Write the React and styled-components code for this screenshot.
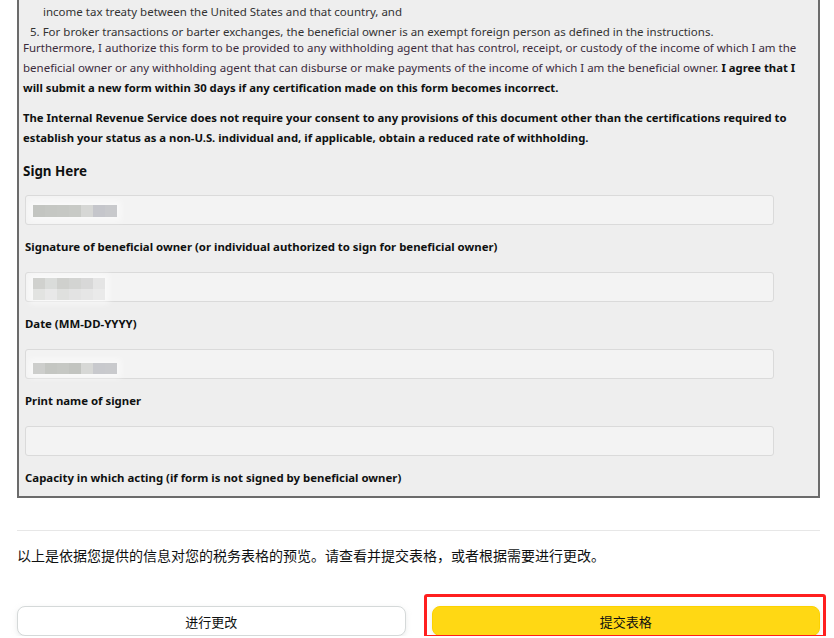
import React from 'react'
import styled, { createGlobalStyle } from 'styled-components'

const GlobalStyle = createGlobalStyle`
  html, body {
    margin: 0;
    padding: 0;
    background: #ffffff;
  }
  body {
    font-family: 'Noto Sans', 'Noto Sans CJK SC', sans-serif;
    color: #0f1111;
    overflow: hidden;
  }
`

const Page = styled.div`
  width: 834px;
  box-sizing: border-box;
  padding: 0 14px 0 17px;
`

const Preview = styled.div`
  background: #eeeeee;
  border: 2px solid #6b6b6b;
  border-top: none;
  padding: 2px 4px 8px 4px;
  font-size: 11.5px;
  line-height: 20px;
`

const List = styled.ol`
  list-style: none;
  margin: 0 0 -4px 0;
  padding: 0;
  color: #333333;
`

const ListLine = styled.li`
  padding-left: ${p => p.$indent}px;
  white-space: nowrap;
`

const Para = styled.p`
  margin: 0 0 10px 0;
  color: #3b2c3c;
  b {
    color: #0f1111;
    font-weight: 700;
    font-size: 11.3px;
  }
`

const Line = styled.span`
  display: block;
  white-space: nowrap;
`

const BoldPara = styled.p`
  margin: 0;
  font-size: 11.3px;
  font-weight: 700;
  color: #0f1111;
`

const SignTitle = styled.h4`
  margin: 13px 0 0 0;
  font-size: 13.4px;
  line-height: 20px;
  font-weight: 700;
  color: #0f1111;
`

const FieldGroup = styled.div`
  margin-left: 2px;
  padding-top: ${p => p.$top}px;
`

const Field = styled.div`
  width: 749px;
  height: 30px;
  box-sizing: border-box;
  background: #f3f3f3;
  border: 1px solid #dadada;
  border-radius: 3px;
  padding: ${p => p.$pad};
  display: flex;
  align-items: flex-start;
`

const Mosaic = styled.div`
  display: grid;
  grid-template-columns: repeat(${p => p.$cols}, 12px);
  grid-auto-rows: ${p => p.$row}px;
  box-shadow: 0 0 6px 4px rgba(255, 255, 255, 0.55);
`

const Tile = styled.span`
  background: ${p => p.$c};
`

const FieldLabel = styled.div`
  margin-top: 12px;
  font-size: 11.4px;
  line-height: 20px;
  font-weight: 700;
  color: #0f1111;
  white-space: nowrap;
`

const Divider = styled.hr`
  margin: 32px 0 0 0;
  border: none;
  border-top: 1px solid #e7e7e7;
`

const Notice = styled.p`
  margin: 14px 0 0 0;
  font-family: 'Noto Sans CJK SC', sans-serif;
  font-size: 14px;
  line-height: 20px;
  color: #0f1111;
`

const Actions = styled.div`
  margin-top: 41px;
  display: grid;
  grid-template-columns: 1fr 1fr;
  column-gap: 26px;
`

const Highlight = styled.div`
  position: relative;
  &::after {
    content: '';
    position: absolute;
    top: -12px;
    left: -8px;
    right: -6px;
    bottom: -2px;
    border: 3px solid #ff1f1f;
    border-radius: 3px;
    pointer-events: none;
  }
`

const Button = styled.button`
  width: 100%;
  height: 30px;
  box-sizing: border-box;
  border-radius: 8px;
  border: 1px solid ${p => (p.$primary ? '#fcd200' : '#d5d9d9')};
  background: ${p => (p.$primary ? '#ffd814' : '#ffffff')};
  box-shadow: 0 2px 5px 0 rgba(213, 217, 217, 0.5);
  font-family: 'Noto Sans CJK SC', sans-serif;
  font-size: 13px;
  color: #0f1111;
  cursor: pointer;
  padding: 0;
`

const signatureTiles = ['#c3c5c1', '#c5c7c3', '#c6c8c4', '#c8cac6', '#d6d7d5', '#c5c6cb', '#c8c9cc']
const dateTiles = [
  '#d0d1ce', '#dadcda', '#cfd0cd', '#d3d4d2', '#d8d8d8', '#e5e5e5',
  '#e2e3e1', '#e8e8e8', '#dfe0de', '#e3e3e3', '#e6e6e6', '#eaeaea',
]
const nameTiles = ['#cdcecc', '#c4c6c2', '#c6c8c4', '#c2c4c0', '#d7d8d6', '#c8c9cd', '#c9cacd']

const fields = [
  { label: 'Signature of beneficial owner (or individual authorized to sign for beneficial owner)', tiles: signatureTiles, cols: 7, row: 12, pad: '9px 7px' },
  { label: 'Date (MM-DD-YYYY)', tiles: dateTiles, cols: 6, row: 11, pad: '5px 7px' },
  { label: 'Print name of signer', tiles: nameTiles, cols: 7, row: 11, pad: '13px 7px' },
  { label: 'Capacity in which acting (if form is not signed by beneficial owner)', tiles: [], cols: 0, row: 0, pad: '0' },
]

export default function App() {
  return (
    <Page>
      <GlobalStyle />
      <Preview>
        <List>
          <ListLine $indent={20}>income tax treaty between the United States and that country, and</ListLine>
          <ListLine $indent={7}>5. For broker transactions or barter exchanges, the beneficial owner is an exempt foreign person as defined in the instructions.</ListLine>
        </List>
        <Para>
          <Line>Furthermore, I authorize this form to be provided to any withholding agent that has control, receipt, or custody of the income of which I am the</Line>
          <Line>beneficial owner or any withholding agent that can disburse or make payments of the income of which I am the beneficial owner. <b>I agree that I</b></Line>
          <Line><b>will submit a new form within 30 days if any certification made on this form becomes incorrect.</b></Line>
        </Para>
        <BoldPara>
          <Line>The Internal Revenue Service does not require your consent to any provisions of this document other than the certifications required to</Line>
          <Line>establish your status as a non-U.S. individual and, if applicable, obtain a reduced rate of withholding.</Line>
        </BoldPara>
        <SignTitle>Sign Here</SignTitle>
        {fields.map((f, i) => (
          <FieldGroup key={f.label} $top={i === 0 ? 14 : 15}>
            <Field $pad={f.pad}>
              {f.tiles.length > 0 && (
                <Mosaic $cols={f.cols} $row={f.row}>
                  {f.tiles.map((c, j) => (
                    <Tile key={j} $c={c} />
                  ))}
                </Mosaic>
              )}
            </Field>
            <FieldLabel>{f.label}</FieldLabel>
          </FieldGroup>
        ))}
      </Preview>
      <Divider />
      <Notice>以上是依据您提供的信息对您的税务表格的预览。请查看并提交表格，或者根据需要进行更改。</Notice>
      <Actions>
        <Button>进行更改</Button>
        <Highlight>
          <Button $primary>提交表格</Button>
        </Highlight>
      </Actions>
    </Page>
  )
}
